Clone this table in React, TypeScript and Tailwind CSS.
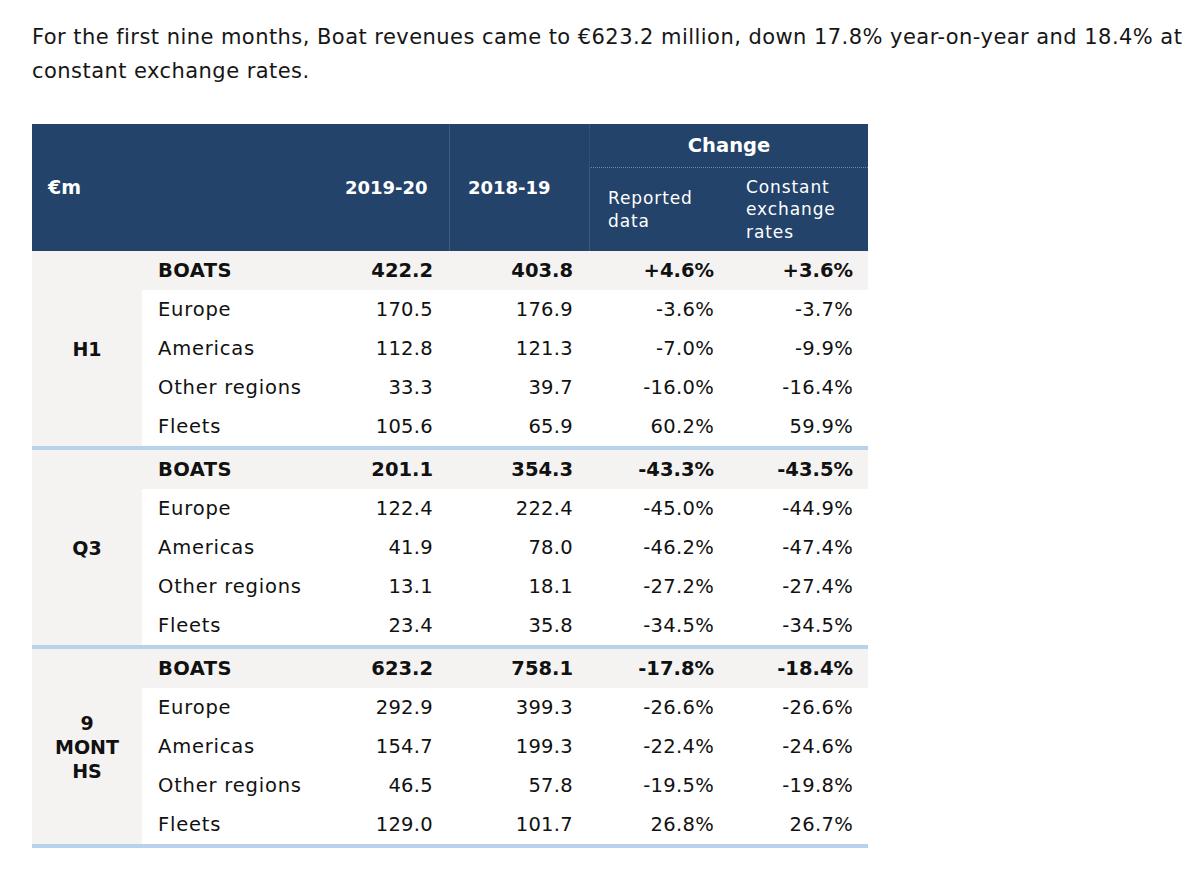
import React from "react";

type Row = {
  label: string;
  a: string;
  b: string;
  c: string;
  d: string;
  total?: boolean;
};

type Section = {
  name: React.ReactNode;
  rows: Row[];
};

const sections: Section[] = [
  {
    name: "H1",
    rows: [
      { label: "BOATS", a: "422.2", b: "403.8", c: "+4.6%", d: "+3.6%", total: true },
      { label: "Europe", a: "170.5", b: "176.9", c: "-3.6%", d: "-3.7%" },
      { label: "Americas", a: "112.8", b: "121.3", c: "-7.0%", d: "-9.9%" },
      { label: "Other regions", a: "33.3", b: "39.7", c: "-16.0%", d: "-16.4%" },
      { label: "Fleets", a: "105.6", b: "65.9", c: "60.2%", d: "59.9%" },
    ],
  },
  {
    name: "Q3",
    rows: [
      { label: "BOATS", a: "201.1", b: "354.3", c: "-43.3%", d: "-43.5%", total: true },
      { label: "Europe", a: "122.4", b: "222.4", c: "-45.0%", d: "-44.9%" },
      { label: "Americas", a: "41.9", b: "78.0", c: "-46.2%", d: "-47.4%" },
      { label: "Other regions", a: "13.1", b: "18.1", c: "-27.2%", d: "-27.4%" },
      { label: "Fleets", a: "23.4", b: "35.8", c: "-34.5%", d: "-34.5%" },
    ],
  },
  {
    name: (
      <>
        9<br />
        MONT
        <br />
        HS
      </>
    ),
    rows: [
      { label: "BOATS", a: "623.2", b: "758.1", c: "-17.8%", d: "-18.4%", total: true },
      { label: "Europe", a: "292.9", b: "399.3", c: "-26.6%", d: "-26.6%" },
      { label: "Americas", a: "154.7", b: "199.3", c: "-22.4%", d: "-24.6%" },
      { label: "Other regions", a: "46.5", b: "57.8", c: "-19.5%", d: "-19.8%" },
      { label: "Fleets", a: "129.0", b: "101.7", c: "26.8%", d: "26.7%" },
    ],
  },
];

function DataRow({ row }: { row: Row }) {
  const num = row.total ? "text-right tracking-[0px]" : "text-right tracking-[0.3px]";
  return (
    <div
      className={
        "grid grid-cols-[185px_122px_140px_140px_139px] h-[39px] items-center text-[19.5px] " +
        (row.total ? "bg-[#f4f3f1] font-bold" : "bg-white")
      }
    >
      <div className={"pl-4 " + (row.total ? "tracking-[0.4px]" : "tracking-[0.8px]")}>{row.label}</div>
      <div className={num + " pr-4"}>{row.a}</div>
      <div className={num + " pr-4"}>{row.b}</div>
      <div className={num + " pr-[15px]"}>{row.c}</div>
      <div className={num + " pr-[15px]"}>{row.d}</div>
    </div>
  );
}

export default function App() {
  return (
    <div
      className="min-h-[870px] bg-white text-[#111] pt-[20px] pl-8"
      style={{ fontFamily: '"DejaVu Sans", "Open Sans", sans-serif' }}
    >
      <p className="text-[21px] leading-[34px] tracking-[0.45px] text-[#161616] whitespace-nowrap">
        For the first nine months, Boat revenues came to €623.2 million, down 17.8% year-on-year and 18.4% at
        <br />
        constant exchange rates.
      </p>

      <div className="mt-[36px] w-[836px]">
        {/* Header */}
        <div className="grid grid-cols-[110px_185px_122px_140px_140px_139px] grid-rows-[44px_83px] bg-[#23436a] text-white">
          <div className="row-span-2 flex items-center pl-4 text-[19px] font-bold">€m</div>
          <div className="row-span-2" />
          <div className="row-span-2 flex items-center pl-[18px] text-[18px] font-bold">2019-20</div>
          <div className="row-span-2 flex items-center pl-[18px] text-[18px] font-bold border-l border-[#3a5a80]">
            2018-19
          </div>
          <div className="col-span-2 flex items-center justify-center text-[19.5px] font-bold border-l border-[#3a5a80] border-b border-b-[#6f8aab] border-dotted">
            Change
          </div>
          <div className="flex items-center pl-[18px] text-[17px] leading-[22.5px] tracking-[0.9px] border-l border-[#3a5a80]">
            Reported
            <br />
            data
          </div>
          <div className="flex items-center pl-[17px] text-[17px] leading-[22.5px] tracking-[0.9px]">
            Constant
            <br />
            exchange
            <br />
            rates
          </div>
        </div>

        {/* Body */}
        {sections.map((s, i) => (
          <div key={i} className="flex border-b-4 border-[#b8d2eb]">
            <div className="w-[110px] shrink-0 bg-[#f4f3f1] flex items-center justify-center text-center text-[19px] font-bold leading-[24px]">
              <div>{s.name}</div>
            </div>
            <div className="flex-1 flex flex-col">
              {s.rows.map((r) => (
                <DataRow key={r.label} row={r} />
              ))}
            </div>
          </div>
        ))}
      </div>
    </div>
  );
}
